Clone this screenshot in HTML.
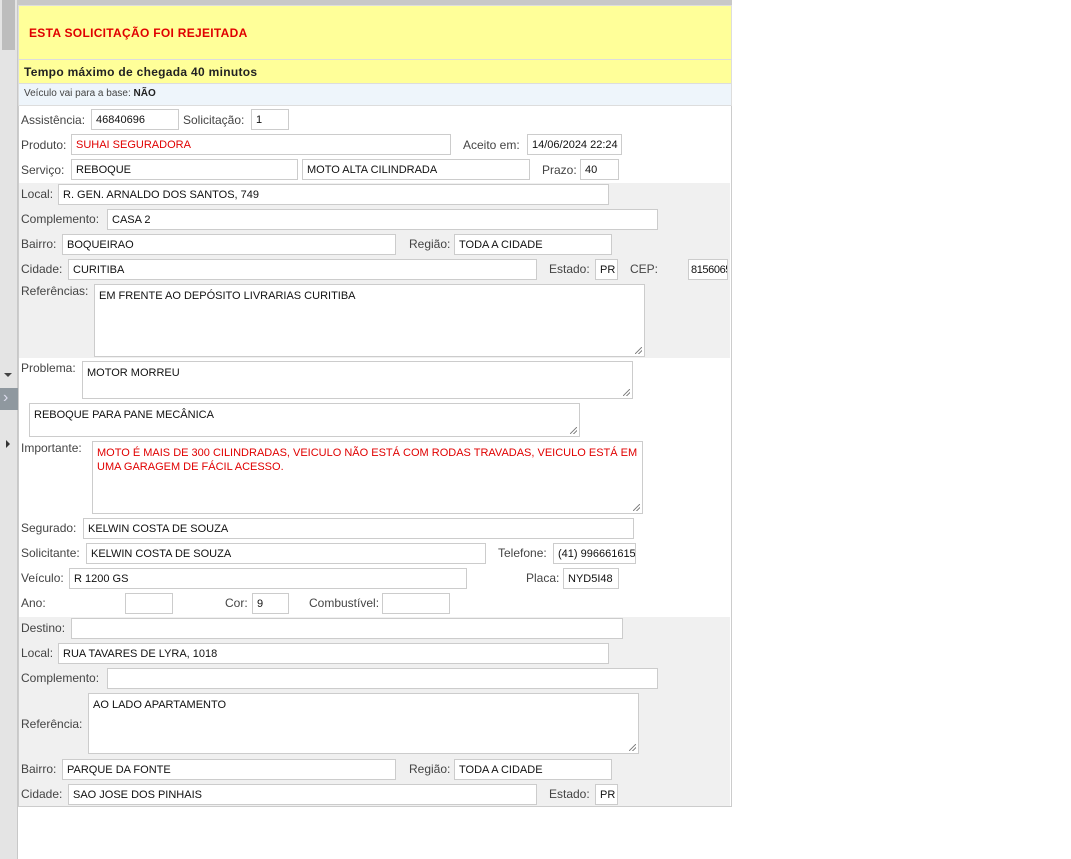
<!DOCTYPE html>
<html><head><meta charset="utf-8"><style>
body{margin:0;width:1071px;height:859px;background:#fff;position:relative;overflow:hidden;font-family:"Liberation Sans","DejaVu Sans",sans-serif;color:#333}
div{position:absolute;box-sizing:border-box}
.l{font-size:12px;line-height:14px;color:#444;white-space:nowrap}
.i{height:21px;border:1px solid #ccc;background:#fff;font-size:11px;line-height:18px;padding-top:1px;padding-left:4px;color:#111;white-space:nowrap;overflow:hidden}
.t{border:1px solid #ccc;background:#fff;font-size:11px;line-height:14px;padding:4px 4px;color:#111}
.t:after{content:"";position:absolute;right:2px;bottom:2px;width:7px;height:7px;background:linear-gradient(135deg,transparent 45%,#888 46%,#888 54%,transparent 55%,transparent 70%,#888 71%,#888 79%,transparent 80%)}
.g{background:#f0f0f0;left:19px;width:711px}
</style></head><body>
<div style="left:0;top:0;width:18px;height:859px;background:#e4e4e4;border-right:1px solid #c8c8c8"></div>
<div style="left:2px;top:0;width:13px;height:50px;background:#bdbdbd"></div>
<div style="left:4px;top:373px;width:0;height:0;border-left:4px solid transparent;border-right:4px solid transparent;border-top:4px solid #444"></div>
<div style="left:0;top:388px;width:18px;height:22px;background:#8f989f;color:#dde;font-size:16px;line-height:20px;padding-left:3px">›</div>
<div style="left:6px;top:440px;width:0;height:0;border-top:4px solid transparent;border-bottom:4px solid transparent;border-left:4px solid #333"></div>

<div style="left:18px;top:0;width:714px;height:807px;border:1px solid #ccc;border-top:none"></div>
<div style="left:18px;top:0;width:714px;height:5px;background:#c8c8c8"></div>
<div style="left:18px;top:5px;width:714px;height:55px;background:#ffff99;border:1px solid #ddd"></div>
<div style="left:29px;top:26px;font-size:12px;font-weight:bold;color:#e00000;letter-spacing:0.3px">ESTA SOLICITAÇÃO FOI REJEITADA</div>
<div style="left:18px;top:59px;width:714px;height:25px;background:#ffff99;border:1px solid #ddd"></div>
<div style="left:24px;top:65px;font-size:12px;font-weight:bold;color:#222;letter-spacing:0.3px">Tempo máximo de chegada 40 minutos</div>
<div style="left:18px;top:83px;width:714px;height:23px;background:#eef5fb;border:1px solid #ddd"></div>
<div style="left:24px;top:88px;font-size:10px;color:#444">Veículo vai para a base: <b style="color:#222">NÃO</b></div>

<div class="g" style="top:183px;height:175px"></div>
<div class="g" style="top:617px;height:189px"></div>

<div class="l" style="left:21px;top:113px">Assistência:</div><div class="i" style="left:91px;top:109px;width:88px">46840696</div>
<div class="l" style="left:183px;top:113px">Solicitação:</div><div class="i" style="left:251px;top:109px;width:38px">1</div>
<div class="l" style="left:21px;top:138px">Produto:</div><div class="i" style="left:71px;top:134px;width:380px;color:#e00000">SUHAI SEGURADORA</div>
<div class="l" style="left:463px;top:138px">Aceito em:</div><div class="i" style="left:527px;top:134px;width:95px">14/06/2024 22:24</div>
<div class="l" style="left:21px;top:163px">Serviço:</div><div class="i" style="left:71px;top:159px;width:227px">REBOQUE</div>
<div class="i" style="left:302px;top:159px;width:228px">MOTO ALTA CILINDRADA</div>
<div class="l" style="left:542px;top:163px">Prazo:</div><div class="i" style="left:580px;top:159px;width:39px">40</div>

<div class="l" style="left:21px;top:187px">Local:</div><div class="i" style="left:58px;top:184px;width:551px">R. GEN. ARNALDO DOS SANTOS, 749</div>
<div class="l" style="left:21px;top:212px">Complemento:</div><div class="i" style="left:107px;top:209px;width:551px">CASA 2</div>
<div class="l" style="left:21px;top:237px">Bairro:</div><div class="i" style="left:62px;top:234px;width:334px">BOQUEIRAO</div>
<div class="l" style="left:409px;top:237px">Região:</div><div class="i" style="left:454px;top:234px;width:158px">TODA A CIDADE</div>
<div class="l" style="left:21px;top:262px">Cidade:</div><div class="i" style="left:68px;top:259px;width:469px">CURITIBA</div>
<div class="l" style="left:549px;top:262px">Estado:</div><div class="i" style="left:595px;top:259px;width:23px">PR</div>
<div class="l" style="left:630px;top:262px">CEP:</div><div class="i" style="left:688px;top:259px;width:40px;padding-left:2px;letter-spacing:-0.4px">81560653</div>
<div class="l" style="left:21px;top:284px">Referências:</div><div class="t" style="left:94px;top:284px;width:551px;height:73px">EM FRENTE AO DEPÓSITO LIVRARIAS CURITIBA</div>

<div class="l" style="left:21px;top:361px">Problema:</div><div class="t" style="left:82px;top:361px;width:551px;height:38px">MOTOR MORREU</div>
<div class="t" style="left:29px;top:403px;width:551px;height:34px">REBOQUE PARA PANE MECÂNICA</div>
<div class="l" style="left:21px;top:441px">Importante:</div><div class="t" style="left:92px;top:441px;width:551px;height:73px;color:#e00000">MOTO É MAIS DE 300 CILINDRADAS, VEICULO NÃO ESTÁ COM RODAS TRAVADAS, VEICULO ESTÁ EM UMA GARAGEM DE FÁCIL ACESSO.</div>

<div class="l" style="left:21px;top:521px">Segurado:</div><div class="i" style="left:83px;top:518px;width:551px">KELWIN COSTA DE SOUZA</div>
<div class="l" style="left:21px;top:546px">Solicitante:</div><div class="i" style="left:86px;top:543px;width:400px">KELWIN COSTA DE SOUZA</div>
<div class="l" style="left:498px;top:546px">Telefone:</div><div class="i" style="left:553px;top:543px;width:83px">(41) 996661615</div>
<div class="l" style="left:21px;top:571px">Veículo:</div><div class="i" style="left:69px;top:568px;width:398px">R 1200 GS</div>
<div class="l" style="left:526px;top:571px">Placa:</div><div class="i" style="left:563px;top:568px;width:56px">NYD5I48</div>
<div class="l" style="left:21px;top:596px">Ano:</div><div class="i" style="left:125px;top:593px;width:48px"></div>
<div class="l" style="left:225px;top:596px">Cor:</div><div class="i" style="left:252px;top:593px;width:37px">9</div>
<div class="l" style="left:309px;top:596px">Combustível:</div><div class="i" style="left:382px;top:593px;width:68px"></div>

<div class="l" style="left:21px;top:621px">Destino:</div><div class="i" style="left:71px;top:618px;width:552px"></div>
<div class="l" style="left:21px;top:646px">Local:</div><div class="i" style="left:58px;top:643px;width:551px">RUA TAVARES DE LYRA, 1018</div>
<div class="l" style="left:21px;top:671px">Complemento:</div><div class="i" style="left:107px;top:668px;width:551px"></div>
<div class="l" style="left:21px;top:717px">Referência:</div><div class="t" style="left:88px;top:693px;width:551px;height:61px">AO LADO APARTAMENTO</div>
<div class="l" style="left:21px;top:762px">Bairro:</div><div class="i" style="left:62px;top:759px;width:334px">PARQUE DA FONTE</div>
<div class="l" style="left:409px;top:762px">Região:</div><div class="i" style="left:454px;top:759px;width:158px">TODA A CIDADE</div>
<div class="l" style="left:21px;top:787px">Cidade:</div><div class="i" style="left:68px;top:784px;width:469px">SAO JOSE DOS PINHAIS</div>
<div class="l" style="left:549px;top:787px">Estado:</div><div class="i" style="left:595px;top:784px;width:23px">PR</div>
</body></html>
